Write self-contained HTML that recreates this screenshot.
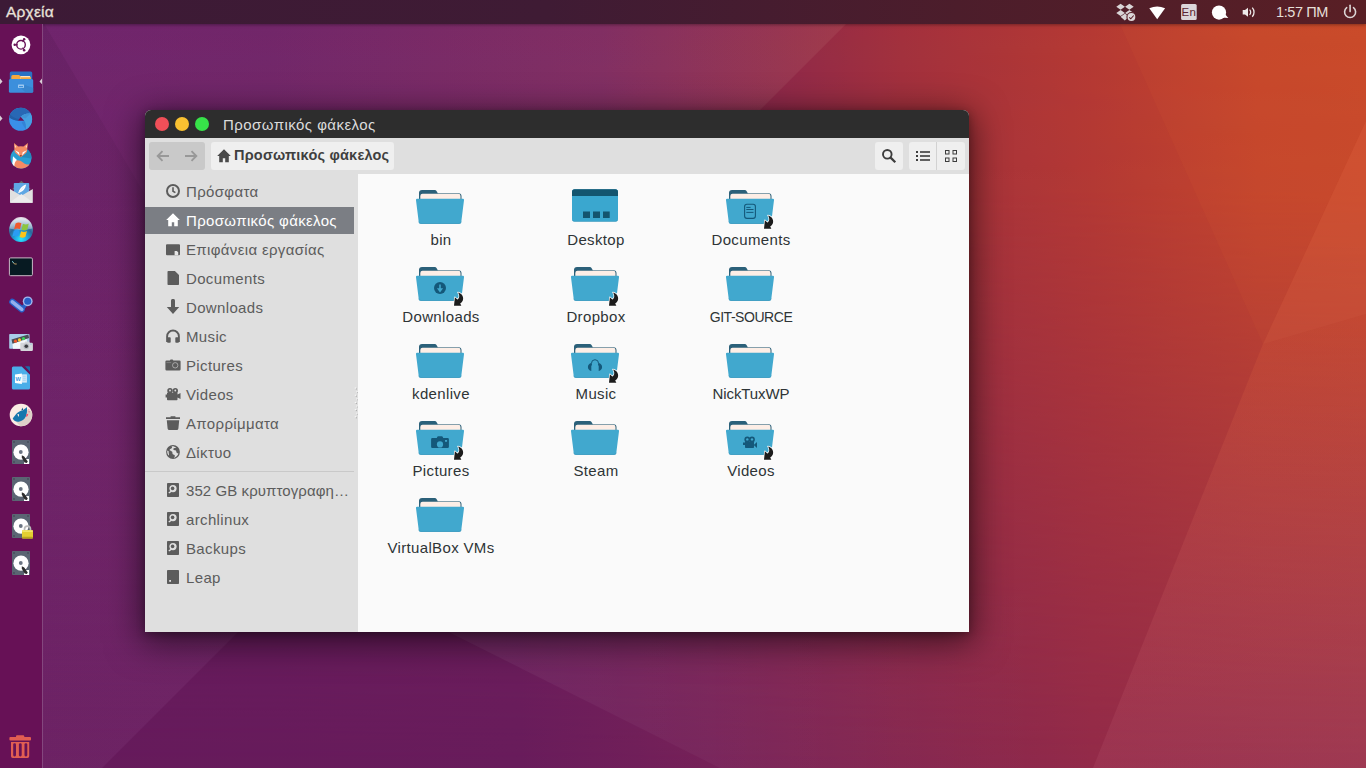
<!DOCTYPE html>
<html lang="el">
<head>
<meta charset="utf-8">
<title>Αρχεία</title>
<style>
*{box-sizing:border-box;margin:0;padding:0}
html,body{width:1366px;height:768px;overflow:hidden;background:#6d2165}
body{position:relative;font-family:"Liberation Sans","DejaVu Sans",sans-serif;font-size:15px;letter-spacing:.35px;color:#3c3c3c}
.abs{position:absolute}
svg.abs{overflow:visible}
#wall{position:absolute;left:0;top:0;width:1366px;height:768px}
#panel{position:absolute;left:0;top:0;width:1366px;height:24px;background:linear-gradient(90deg,#3c1a36 0%,#3f1b34 40%,#4c1d2b 70%,#591f25 100%);box-shadow:0 1px 3px rgba(0,0,0,.35);z-index:1}
#panel .app{position:absolute;left:6px;top:0;line-height:24px;font-size:15.5px;color:#e9e2da;letter-spacing:.2px;-webkit-text-stroke:.3px #e9e2da}
#panel .clock{position:absolute;left:1276px;top:0;line-height:24px;font-size:14.500px;letter-spacing:-.4px;color:#e6dfd8}
#launcher{z-index:2;position:absolute;left:0;top:24px;width:43px;height:744px;background:#671156;border-right:1px solid #84477e}
#win{position:absolute;left:145px;top:110px;width:824px;height:522px;border-radius:6px 6px 0 0;box-shadow:0 7px 34px 4px rgba(0,0,0,.55),0 2px 8px rgba(0,0,0,.3);background:#fafafa;overflow:hidden}
#title{position:absolute;left:0;top:0;width:824px;height:28px;background:#2d2d2d}
#title .t{position:absolute;left:78px;top:1px;line-height:28px;font-size:15px;letter-spacing:.45px;color:#dcdcdc}
.dot{position:absolute;top:7px;width:14px;height:14px;border-radius:50%}
#tool{position:absolute;left:0;top:28px;width:824px;height:36px;background:#dfdfdf}
#side{position:absolute;left:0;top:64px;width:213px;height:458px;background:#dfdfdf}
#content{position:absolute;left:213px;top:64px;width:611px;height:458px;background:#fafafa}
.btn{position:absolute;top:4px;height:28px;background:#efefef;border-radius:3px}
.row{position:absolute;left:0;width:209px;height:27px;line-height:27px;color:#5c5c5c}
.row span{position:absolute;left:41px;top:0;white-space:nowrap}
.row.sel{background:#7b7e84;color:#fff}
.row svg{position:absolute;left:20px;top:5px;width:16px;height:16px}
.lab{position:absolute;width:150px;text-align:center;font-size:15px;line-height:18px;color:#2e3436;white-space:nowrap}
</style>
</head>
<body>
<svg id="wall" viewBox="0 0 1366 768" preserveAspectRatio="none">
<defs>
<linearGradient id="gt" x1="0" y1="0" x2="1366" y2="0" gradientUnits="userSpaceOnUse">
<stop offset="0" stop-color="#691d66"/><stop offset=".2" stop-color="#6b1e62"/><stop offset=".44" stop-color="#7a245c"/><stop offset=".57" stop-color="#912a49"/><stop offset=".66" stop-color="#a3313d"/><stop offset=".8" stop-color="#b63a33"/><stop offset=".92" stop-color="#c6462b"/><stop offset="1" stop-color="#c9482a"/>
</linearGradient>
<linearGradient id="gb" x1="0" y1="0" x2="1366" y2="0" gradientUnits="userSpaceOnUse">
<stop offset="0" stop-color="#651a5b"/><stop offset=".38" stop-color="#681c5b"/><stop offset=".52" stop-color="#752158"/><stop offset=".66" stop-color="#84264f"/><stop offset=".8" stop-color="#922a49"/><stop offset="1" stop-color="#96304a"/>
</linearGradient>
<linearGradient id="gm" x1="0" y1="0" x2="0" y2="768" gradientUnits="userSpaceOnUse">
<stop offset="0" stop-color="#000"/><stop offset=".25" stop-color="#111"/><stop offset="1" stop-color="#fff"/>
</linearGradient>
<mask id="mk"><rect width="1366" height="768" fill="url(#gm)"/></mask>
<linearGradient id="f1" x1="0" y1="0" x2="870" y2="0" gradientUnits="userSpaceOnUse"><stop offset="0" stop-color="#c98cdb" stop-opacity=".07"/><stop offset=".5" stop-color="#e0b0d0" stop-opacity=".07"/><stop offset="1" stop-color="#fff0c0" stop-opacity=".07"/></linearGradient>
<linearGradient id="f2" x1="480" y1="0" x2="1050" y2="0" gradientUnits="userSpaceOnUse"><stop offset="0" stop-color="#fff" stop-opacity=".05"/><stop offset="1" stop-color="#fff" stop-opacity="0"/></linearGradient>
<linearGradient id="f4" x1="0" y1="314" x2="0" y2="768" gradientUnits="userSpaceOnUse"><stop offset="0" stop-color="#f97838" stop-opacity=".13"/><stop offset="1" stop-color="#ffa8b8" stop-opacity=".075"/></linearGradient>
<linearGradient id="f3" x1="0" y1="24" x2="0" y2="420" gradientUnits="userSpaceOnUse"><stop offset="0" stop-color="#200020" stop-opacity=".09"/><stop offset="1" stop-color="#200020" stop-opacity="0"/></linearGradient>
</defs>
<rect width="1366" height="768" fill="url(#gt)"/>
<rect width="1366" height="768" fill="url(#gb)" mask="url(#mk)"/>
<polygon points="0,0 870,0 102,768 0,768" fill="url(#f1)"/>
<polygon points="42,20 160,220 160,420 42,420" fill="url(#f3)"/>
<polygon points="377,596 720,768 1100,768 1100,596" fill="url(#f2)"/>
<polygon points="1110,0 1120,24 1263,344 1366,121 1366,0" fill="#ff9040" fill-opacity=".05"/>
<polygon points="1263,344 1366,121 1366,314" fill="#ff8a50" fill-opacity=".16"/>
<polygon points="1263,344 1366,314 1366,768 1093,768" fill="url(#f4)"/>
</svg>
<div id="panel"><div class="app">Αρχεία</div><div class="clock">1:57 ΠΜ</div><svg class="abs" style="left:1100px;top:0" width="266" height="24" viewBox="1100 0 266 24">
<g fill="#d9d4d6"><path d="M1120.600 3.700l4.300 3-4.300 3-4.300-3zM1129.400 3.700l4.300 3-4.300 3-4.300-3zM1120.600 10l4.300 3-4.300 3-4.300-3zM1129.400 10l4.300 3-4.300 3-4.300-3zM1125 13.800l4 3-4.200 3.700-4.200-3.700 4.200-3z"/></g>
<circle cx="1131.400" cy="17" r="5" fill="#59202a"/><circle cx="1131.400" cy="17" r="3.900" fill="#dcd7d9"/><path d="M1129.300 17.300l1.500 1.500 2.900-3.300" fill="none" stroke="#59202a" stroke-width="1.100"/>
<path d="M1149.300 8.300Q1157.200 4.800 1165.100 8.300L1157.200 19.200Z" fill="#fff"/>
<rect x="1181.100" y="3.900" width="15.600" height="16.100" rx="1.600" fill="#dcd6d9"/>
<text x="1188.900" y="16.200" font-family="Liberation Sans, sans-serif" font-size="11.500" fill="#5c2430" text-anchor="middle">En</text>
<circle cx="1219" cy="12.600" r="7.100" fill="#fff"/><path d="M1222 17.500l6.300.4-3.800-4.500z" fill="#fff"/>
<path d="M1242.700 10h2.300l3-2.300v9l-3-2.300h-2.300z" fill="#efeaea"/><path d="M1249.600 9.600a4 4 0 0 1 0 5.200" fill="none" stroke="#efeaea" stroke-width="1.200"/><path d="M1252.300 7.600a7 7 0 0 1 0 9.200" fill="none" stroke="#efeaea" stroke-width="1.300"/>
<path d="M1346.700 7.700a5.500 5.500 0 1 0 6.800 0" fill="none" stroke="#dcd6d6" stroke-width="1.600" stroke-linecap="round"/><path d="M1350.100 5.300v6.300" stroke="#dcd6d6" stroke-width="1.600" stroke-linecap="round"/>
</svg></div>
<div id="launcher"><svg class="abs" style="left:0;top:0" width="43" height="744" viewBox="0 24 43 744">
<!-- ubuntu -->
<circle cx="21" cy="44.800" r="9.400" fill="#fff"/><circle cx="21" cy="44.800" r="4.300" fill="none" stroke="#671156" stroke-width="1.400"/><path d="M21 44.800L14.700 44.800M21 44.800L24.200 39.300M21 44.800L24.200 50.300" stroke="#671156" stroke-width=".9"/><circle cx="21" cy="44.800" r="3.100" fill="#fff"/>
<g fill="#671156"><circle cx="14.700" cy="44.800" r="1.250"/><circle cx="24.150" cy="39.350" r="1.250"/><circle cx="24.150" cy="50.250" r="1.250"/></g>
<!-- files -->
<path d="M0 78.600l2.500 2.800-2.500 2.800zM42 78.600l-2.500 2.800 2.500 2.800z" fill="#d9cfd8"/>
<rect x="9.800" y="71.500" width="22.400" height="12" rx="1.500" fill="#2a72c4"/><path d="M11.300 80v-3.500a1.500 1.500 0 0 1 1.500-1.500h6.200l1.300 1h9a1.500 1.500 0 0 1 1.500 1.500V80z" fill="#f5a940"/><path d="M20.500 76.200h9.500v3h-9.500z" fill="#fdf4e4"/><path d="M20.500 77.200h10.300v3h-10.300z" fill="#f5a940"/>
<rect x="8.900" y="79" width="24.300" height="13.800" rx="1.500" fill="#3c8fdc"/><path d="M21 88l4.800 4.800h5.900a1.500 1.500 0 0 0 1.500-1.500V88l-8-3z" fill="#3580c8" opacity=".7"/><rect x="18" y="84.500" width="6" height="3.400" rx=".6" fill="#9cc8f0"/><rect x="19" y="86" width="4" height="1.200" fill="#3c8fdc"/>
<!-- chromium-ish -->
<path d="M0 115.600l2.500 2.800-2.500 2.800z" fill="#d9cfd8"/>
<circle cx="20.600" cy="119.250" r="11.500" fill="#3a8fe8"/>
<path d="M9.300 117.200A11.500 11.500 0 0 1 30.600 113.600C26.500 113.300 23 114.600 20.600 116.750L17.900 120.700C14.500 120.300 11.200 118.800 9.300 117.200z" fill="#2868b5"/>
<path d="M9.300 117.200L10.300 114.600C12.500 117 15.500 118.500 19 119.100L17.900 120.700C14.500 120.300 11.200 118.800 9.300 117.200z" fill="#235fa6"/>
<path d="M20.600 116.750C23 114.600 26.500 113.300 30.600 113.600A11.500 11.500 0 0 1 25.800 129.500C26.300 126 25.600 123 24.200 120.700z" fill="#45a0e2"/>
<path d="M20.600 116.750C23 114.600 26.500 113.300 30.600 113.600L25.500 118.500z" fill="#3f93d6"/>
<path d="M24.200 120.700C25.600 123 26.300 126 25.800 129.500L21.500 122.500z" fill="#3383d6"/>
<path d="M20.600 116.750L17.900 120.700L24.200 120.700z" fill="#6a1257"/>
<!-- fox -->
<circle cx="21" cy="157.900" r="10.600" fill="#2a9fd3"/>
<path d="M21 157L27.800 149.800A10.600 10.600 0 0 1 31.500 158.500z" fill="#2285b6" opacity=".8"/>
<path d="M14.200 161.200C17 159.600 20 160 23 162.500C25.500 164.500 27.500 165 29.600 164.200A10.600 10.600 0 0 1 13.800 165.700z" fill="#f58a64"/>
<path d="M13 156.200L17 160C15.400 161 14.500 163 14.300 166.200A10.600 10.600 0 0 1 12.300 163.500z" fill="#fff"/>
<path d="M14 143.100L18.300 146.600Q20.800 145.800 23.400 146.600L27.900 143.100L27.200 149.500Q27.500 151.500 25.500 153.500L20.800 157.300L16 153.500Q14 151.500 14.400 149.500z" fill="#f58a64"/>
<path d="M14.700 144.600L16.600 147L15 147.800zM27.200 144.600L25.300 147L26.900 147.800z" fill="#fcd6c6"/>
<path d="M14.900 150.300L18.900 152.200L19.600 155.600zM26.800 150.300L22.700 152.200L22 155.600z" fill="#fff"/>
<path d="M19.700 155.300h2.200l-1.100 1.700z" fill="#7a3a2a"/>
<!-- mail -->
<path d="M21.400 180.800l9.500 8.400h-19z" fill="#6a6a6a"/><rect x="13.800" y="183" width="15.400" height="14" rx=".8" fill="#5fa7e4"/><path d="M18.300 193.200c.6-4 3.800-7.300 7.800-8.600-.6 4-3.400 7.500-7.800 8.600z" fill="#fff"/><path d="M18.300 193.300l5.800-6.600" stroke="#cfe2f5" stroke-width=".5"/>
<path d="M10 189.100l11.400 6.600 11.400-6.600v12.900a.8.800 0 0 1-.8.800H10.800a.8.800 0 0 1-.8-.8z" fill="#e0e0e0"/><path d="M10 202.300l11.400-8.200 11.400 8.200a.8.800 0 0 1-.6.500H10.600a.8.800 0 0 1-.6-.5z" fill="#ececec"/>
<!-- windows orb -->
<defs><radialGradient id="orb" cx=".5" cy=".88" r=".85"><stop offset="0" stop-color="#28e8ff"/><stop offset=".3" stop-color="#20a8e0"/><stop offset=".6" stop-color="#2a6a9c"/><stop offset="1" stop-color="#7a98b8"/></radialGradient><linearGradient id="orbh" x1="0" y1="0" x2="0" y2="1"><stop offset="0" stop-color="#fff" stop-opacity=".85"/><stop offset="1" stop-color="#fff" stop-opacity=".3"/></linearGradient></defs>
<circle cx="21" cy="230" r="12" fill="url(#orb)"/><path d="M9.600 228.500A11.400 11.400 0 0 1 32.400 228.500Q21 232 9.600 228.500z" fill="url(#orbh)"/>
<g transform="translate(21.200 230.200) scale(1.220) translate(-20.400 -229.300)"><path d="M15.800 223.800c1.500-1 3.200-1 4.800-.2l-1.200 4.800c-1.600-.8-3.300-.8-4.800.2z" fill="#f0582a"/><path d="M21.800 224.100c1.600.8 3.300.8 4.800-.2l-1.200 4.800c-1.500 1-3.200 1-4.800.2z" fill="#8cc63f"/><path d="M14.300 229.800c1.500-1 3.200-1 4.800-.2l-1.200 4.800c-1.600-.8-3.300-.8-4.800.2z" fill="#2a9df4"/><path d="M20.300 230.100c1.600.8 3.300.8 4.800-.2l-1.200 4.800c-1.500 1-3.200 1-4.800.2z" fill="#fcc419"/></g>
<!-- terminal -->
<rect x="9.400" y="257.900" width="23" height="17.800" rx="1.200" fill="#071a22" stroke="#c9b9c6" stroke-width="1"/><path d="M12.500 261.500l2 2.500h2.200" fill="none" stroke="#d9b070" stroke-width=".9"/><path d="M12.300 261.200l1.200 1.600" stroke="#5ac8e8" stroke-width=".9"/>
<!-- steam -->
<path d="M12.300 301.800L21.800 309.300" stroke="#2860c8" stroke-width="6.200" stroke-linecap="round"/><path d="M21.800 309.300l4.500-5.500" stroke="#2860c8" stroke-width="4"/><path d="M12.300 301.800L21.800 309.300" stroke="#93aeee" stroke-width="3.600" stroke-linecap="round"/>
<circle cx="27.700" cy="301.300" r="4.900" fill="#a3b8ee"/><circle cx="27.700" cy="301.300" r="3.500" fill="#2860c8"/>
<!-- screenshot -->
<rect x="9.200" y="334" width="20.300" height="14.700" rx=".8" fill="#a9cdea"/><path d="M12.500 343.500l14-5.500 1.500 10.700H13z" fill="#f3f7fb"/><path d="M11.500 339.500l16.800-5 .8 3.600-16.600 5.600z" fill="#4a4f57"/><circle cx="15.500" cy="341.200" r="1.600" fill="#f0582a"/><circle cx="19.500" cy="339.900" r="1.600" fill="#f8c630"/><circle cx="23.500" cy="338.600" r="1.600" fill="#3ad455"/>
<path d="M21.500 342.800h3l.8-1.200h3.600l.8 1.200h2a1.200 1.200 0 0 1 1.200 1.200v5.800a1.200 1.200 0 0 1-1.200 1.200H21.500a1.200 1.200 0 0 1-1.200-1.200V344a1.200 1.200 0 0 1 1.200-1.200z" fill="#d4d6da"/><circle cx="26.300" cy="346.300" r="2.900" fill="#b9bcc2"/><circle cx="26.300" cy="346.300" r="1.800" fill="#3a3d42"/><circle cx="31" cy="344" r=".6" fill="#6ab0e8"/>
<!-- writer -->
<path d="M13.400 366.600h8.300l8.300 8.100v13.300a1.500 1.500 0 0 1-1.500 1.500H13.400a1.500 1.500 0 0 1-1.500-1.500v-19.900a1.500 1.500 0 0 1 1.500-1.500z" fill="#4aaee9"/><path d="M25 366.300h3.800a1.200 1.200 0 0 1 1.200 1.200v4.300z" fill="#1a6aa8"/><rect x="21.500" y="374.400" width="5.400" height="8.200" fill="#d4e9f8"/><path d="M22.800 376.200h3M22.800 378.200h3M22.800 380.200h3" stroke="#9ccdf0" stroke-width=".9"/><path d="M15 374.500l6.900-.9v10.300l-6.900-.9z" fill="#fff"/>
<text x="18.400" y="381.300" font-family="Liberation Sans, sans-serif" font-size="5.600" font-weight="bold" fill="#3a9ade" text-anchor="middle">W</text>
<!-- wireshark-ish -->
<circle cx="21" cy="415" r="11.300" fill="#fbece4"/><path d="M16 421.500L27 410L31.500 411A11.300 11.300 0 0 1 20 426.200z" fill="#ddd0c8"/>
<path d="M12.700 418.600C14.500 416 16 414 17.500 412.800C19.500 411.200 21.500 410.600 23 410.200L24.500 409C25.600 408.300 26.400 407.700 26.900 407.100C27.300 410.500 27 414 25.800 416.500C24.500 419.200 22 421.200 18.800 421.700C16.500 422 14 421.300 12.700 418.600z" fill="#1777ad"/>
<path d="M21.300 410.300l1.200-2.900.7 2.600z" fill="#0f5680"/>
<path d="M17.100 414.600l1.900-.6v2.900z" fill="#fbece4"/>
<path d="M26.200 414.300l2.100-.6-.6 2.200-1.500 1.200z" fill="#f4526a"/><circle cx="29.100" cy="411.800" r=".65" fill="#f4526a"/><circle cx="28.900" cy="409.700" r=".5" fill="#f4526a"/>
<g transform="translate(0,440)"><rect x="12" y="0" width="18" height="24" rx=".8" fill="#5b6573"/><g fill="#454d59"><circle cx="14" cy="2" r=".9"/><circle cx="28" cy="2" r=".9"/><circle cx="14" cy="22" r=".9"/></g><circle cx="21" cy="12.200" r="7.600" fill="#fff"/><circle cx="20.800" cy="12" r="1.900" fill="#6b7482"/><rect x="24" y="19" width="5" height="5" fill="#fff"/><path d="M21.800 15.200l2.400 1.300 3.600 5-1 1.600-2.200-.6-2.800-4.800z" fill="#2d2d2d"/></g><g transform="translate(0,477)"><rect x="12" y="0" width="18" height="24" rx=".8" fill="#5b6573"/><g fill="#454d59"><circle cx="14" cy="2" r=".9"/><circle cx="28" cy="2" r=".9"/><circle cx="14" cy="22" r=".9"/></g><circle cx="21" cy="12.200" r="7.600" fill="#fff"/><circle cx="20.800" cy="12" r="1.900" fill="#6b7482"/><rect x="24" y="19" width="5" height="5" fill="#fff"/><path d="M21.800 15.200l2.400 1.300 3.600 5-1 1.600-2.200-.6-2.800-4.800z" fill="#2d2d2d"/></g><g transform="translate(0,514)"><rect x="12" y="0" width="18" height="24" rx=".8" fill="#5b6573"/><g fill="#454d59"><circle cx="14" cy="2" r=".9"/><circle cx="28" cy="2" r=".9"/><circle cx="14" cy="22" r=".9"/></g><circle cx="21" cy="12.200" r="7.600" fill="#fff"/><circle cx="20.800" cy="12" r="1.900" fill="#6b7482"/><path d="M24.500 17v-1.800a3 3 0 0 1 6 0V17" fill="none" stroke="#b9b9b9" stroke-width="1.700"/><rect x="22" y="16.300" width="11" height="8.200" rx=".8" fill="#e3cf32"/><rect x="22" y="16.300" width="11" height="1.600" rx=".8" fill="#f0e468"/><rect x="22" y="22.800" width="11" height="1.700" rx=".8" fill="#b8a51d"/></g><g transform="translate(0,551)"><rect x="12" y="0" width="18" height="24" rx=".8" fill="#5b6573"/><g fill="#454d59"><circle cx="14" cy="2" r=".9"/><circle cx="28" cy="2" r=".9"/><circle cx="14" cy="22" r=".9"/></g><circle cx="21" cy="12.200" r="7.600" fill="#fff"/><circle cx="20.800" cy="12" r="1.900" fill="#6b7482"/><rect x="24" y="19" width="5" height="5" fill="#fff"/><path d="M21.800 15.200l2.400 1.300 3.600 5-1 1.600-2.200-.6-2.800-4.800z" fill="#2d2d2d"/></g>
<!-- trash -->
<g fill="#e15e52"><rect x="9.400" y="737" width="21.600" height="3.600" rx="1"/><rect x="16" y="735.300" width="8.200" height="3" rx="1"/><path d="M11 741.900h18.200v14.400a1.800 1.800 0 0 1-1.800 1.800H12.800a1.800 1.800 0 0 1-1.800-1.800z"/></g>
<g fill="#671156"><rect x="13.200" y="743.200" width="2.800" height="13.200" rx="1.300"/><rect x="18.900" y="743.200" width="2.800" height="13.200" rx="1.300"/><rect x="24.500" y="743.200" width="2.800" height="13.200" rx="1.300"/></g>
</svg></div>
<div id="win">
<div id="title"><div class="dot" style="left:10px;background:#f04f58"></div><div class="dot" style="left:30px;background:#f9c131"></div><div class="dot" style="left:50px;background:#37e349"></div><div class="t">Προσωπικός φάκελος</div></div>
<div id="tool">
<div class="btn" style="left:4px;width:56px;background:#c9c9c9">
<svg class="abs" style="left:0;top:0" width="56" height="28" viewBox="0 0 56 28"><g fill="none" stroke="#989898" stroke-width="1.900"><path d="M20 14H9M13.500 9.200L8.700 14l4.800 4.800"/><path d="M36 14H47M42.500 9.200L47.300 14l-4.800 4.800"/></g></svg>
</div>
<div class="btn" style="left:66px;width:183px">
<svg class="abs" style="left:5px;top:6px" width="16" height="16" viewBox="0 0 16 16"><path d="M8 1.300L1.200 8H3.200V14.300H6.800V10.300H9.200V14.300H12.800V8H14.800Z" fill="#4a4a4a"/></svg>
<div class="abs pathtxt" style="left:23px;top:0;line-height:27px;font-weight:bold;font-size:14.500px;letter-spacing:.2px;color:#3f3f3f;white-space:nowrap">Προσωπικός φάκελος</div>
</div>
<div class="btn" style="left:730px;width:28px"><svg class="abs" style="left:6px;top:6px" width="16" height="16" viewBox="0 0 16 16"><circle cx="6.300" cy="6.300" r="4.300" fill="none" stroke="#3d3d3d" stroke-width="1.900"/><path d="M9.600 9.600L14.300 14.300" stroke="#3d3d3d" stroke-width="2.200"/></svg></div>
<div class="btn" style="left:764px;width:56px"><div class="abs" style="left:27px;top:0;width:1px;height:28px;background:#d2d2d2"></div>
<svg class="abs" style="left:6px;top:6px" width="16" height="16" viewBox="0 0 16 16"><g fill="#3d3d3d"><rect x="1" y="3" width="2" height="2"/><rect x="1" y="7" width="2" height="2"/><rect x="1" y="11" width="2" height="2"/><rect x="5" y="3.200" width="10" height="1.600"/><rect x="5" y="7.200" width="10" height="1.600"/><rect x="5" y="11.200" width="10" height="1.600"/></g></svg>
<svg class="abs" style="left:34px;top:6px" width="16" height="16" viewBox="0 0 16 16"><g fill="none" stroke="#3d3d3d" stroke-width="1"><rect x="2.500" y="2.500" width="3.500" height="3.500"/><rect x="10" y="2.500" width="3.500" height="3.500"/><rect x="2.500" y="10" width="3.500" height="3.500"/><rect x="10" y="10" width="3.500" height="3.500"/></g></svg>
</div>
</div>
<div id="side">
<div class="row" style="top:4px"><svg viewBox="0 0 16 16"><circle cx="8" cy="8" r="6" fill="none" stroke="currentColor" stroke-width="2"/><path d="M8 4.3V8.2L10.4 9.6" fill="none" stroke="currentColor" stroke-width="1.6"/></svg><span>Πρόσφατα</span></div>
<div class="row sel" style="top:33px"><svg viewBox="0 0 16 16"><path d="M8 1.3L1.2 8H3.2V14.3H6.8V10.3H9.2V14.3H12.8V8H14.8Z" fill="currentColor"/></svg><span>Προσωπικός φάκελος</span></div>
<div class="row" style="top:62px"><svg viewBox="0 0 16 16"><path d="M2 3.2h12a1 1 0 0 1 1 1v9a1 1 0 0 1-1 1H2a1 1 0 0 1-1-1v-9a1 1 0 0 1 1-1z" fill="currentColor"/><path d="M9.6 10h2.2l1.4 1.3v2.9H9.6z" fill="#e6e6e6"/></svg><span>Επιφάνεια εργασίας</span></div>
<div class="row" style="top:91px"><svg viewBox="0 0 16 16"><path d="M3.3 1h6.6L14 5v9.2a.8.8 0 0 1-.8.8H3.3a.8.8 0 0 1-.8-.8V1.8a.8.8 0 0 1 .8-.8z" fill="currentColor"/></svg><span>Documents</span></div>
<div class="row" style="top:120px"><svg viewBox="0 0 16 16"><path d="M6 1.8a2 2 0 0 1 4 0V8h4.2L8 15 1.8 8H6z" fill="currentColor"/></svg><span>Downloads</span></div>
<div class="row" style="top:149px"><svg viewBox="0 0 16 16"><path d="M2.1 14V8.4a5.9 5.9 0 0 1 11.8 0V14" fill="none" stroke="currentColor" stroke-width="1.9"/><rect x="2.1" y="9.2" width="3.6" height="5.6" rx=".8" fill="currentColor"/><rect x="10.3" y="9.2" width="3.6" height="5.6" rx=".8" fill="currentColor"/></svg><span>Music</span></div>
<div class="row" style="top:178px"><svg viewBox="0 0 16 16"><path d="M1.6 3.4h3.2l.8-1h2l.8 1h6a1.2 1.2 0 0 1 1.2 1.2v7.6a1.2 1.2 0 0 1-1.2 1.2H1.6A1.2 1.2 0 0 1 .4 12.200V4.600a1.200 1.200 0 0 1 1.200-1.200z" fill="currentColor"/><circle cx="10.2" cy="8.300" r="2.700" fill="none" stroke="#e0e0e0" stroke-opacity=".55" stroke-width="1"/><path d="M1.400 5.600h4.800" stroke="#e0e0e0" stroke-opacity=".35" stroke-width=".8"/></svg><span>Pictures</span></div>
<div class="row" style="top:207px"><svg viewBox="0 0 16 16"><circle cx="5" cy="4.700" r="2.700" fill="currentColor"/><circle cx="10.300" cy="4.700" r="2.700" fill="currentColor"/><circle cx="5" cy="4.500" r=".9" fill="#dfdfdf"/><circle cx="10.300" cy="4.500" r=".9" fill="#dfdfdf"/><path d="M2 6.800h10.500v1.700l3-1.500v6l-3-1.500v1.900a.8.800 0 0 1-.8.800H2.800a.8.800 0 0 1-.8-.8V11.500H.6V8.600H2z" fill="currentColor"/></svg><span>Videos</span></div>
<div class="row" style="top:236px"><svg viewBox="0 0 16 16"><path d="M5.600 1.300h4.800v1H15v1.800H1V2.300h4.600z" fill="currentColor"/><path d="M1.800 5.200h12.400l-.8 8.300a1.700 1.700 0 0 1-1.700 1.500H4.300a1.700 1.700 0 0 1-1.700-1.500z" fill="currentColor"/></svg><span>Απορρίμματα</span></div>
<div class="row" style="top:265px"><svg viewBox="0 0 16 16"><circle cx="8" cy="8" r="6.900" fill="currentColor"/><path d="M6.500 2.300c1 .8.600 1.900-.4 2.300-1 .5-1.700 1-1.300 2 .4.800 1.500.4 2.200 1 .8.800 0 1.800.8 2.600.7.700 1.700.3 2 1.300.3.900-.4 1.700-1.200 2.300 2.400-.3 4.200-2 4.800-4.200-.6-.2-1.200-.4-1.700-.9-.6-.7-.2-1.500-.9-2.100-.7-.6-1.700-.1-2.300-.8-.6-.8.300-1.600 1.100-1.700.7-.1 1.200.2 1.700-.2-1.200-1.200-3-1.900-4.800-1.600zM2.300 6.500c-.3 1.800.2 3.600 1.400 4.900.5-.5.400-1.200.1-1.800-.3-.7-.2-1.200.1-1.800-.5-.6-1-.9-1.600-1.300z" fill="#dfdfdf"/></svg><span>Δίκτυο</span></div>
<div class="row" style="top:303px"><svg viewBox="0 0 16 16"><rect x="2" y="1" width="12" height="14" rx=".8" fill="currentColor"/><circle cx="8" cy="6.600" r="3.600" fill="#dfdfdf"/><circle cx="7.600" cy="6.400" r="1.800" fill="currentColor"/><path d="M3.400 10.600l2.600-2 .8 1.200-2.600 1.800z" fill="#dfdfdf"/></svg><span style="letter-spacing:.08px">352 GB κρυπτογραφη…</span></div>
<div class="row" style="top:332px"><svg viewBox="0 0 16 16"><rect x="2" y="1" width="12" height="14" rx=".8" fill="currentColor"/><circle cx="8" cy="6.600" r="3.600" fill="#dfdfdf"/><circle cx="7.600" cy="6.400" r="1.800" fill="currentColor"/><path d="M3.400 10.600l2.600-2 .8 1.200-2.600 1.800z" fill="#dfdfdf"/></svg><span>archlinux</span></div>
<div class="row" style="top:361px"><svg viewBox="0 0 16 16"><rect x="2" y="1" width="12" height="14" rx=".8" fill="currentColor"/><circle cx="8" cy="6.600" r="3.600" fill="#dfdfdf"/><circle cx="7.600" cy="6.400" r="1.800" fill="currentColor"/><path d="M3.400 10.600l2.600-2 .8 1.200-2.600 1.800z" fill="#dfdfdf"/></svg><span>Backups</span></div>
<div class="row" style="top:390px"><svg viewBox="0 0 16 16"><rect x="2" y="1" width="12" height="14" rx=".8" fill="currentColor"/><rect x="4.200" y="11" width="1.800" height="1.800" fill="#dfdfdf"/></svg><span>Leap</span></div>
<div class="abs" style="left:0;top:297px;width:209px;height:1px;background:#c9c9c9"></div>
<svg class="abs" style="left:209px;top:212px" width="5" height="36" viewBox="0 0 5 36"><g fill="#fafafa"><rect x="0.8" y="1.5" width="1.200" height="1.200"/><rect x="2.4" y="5.1" width="1.200" height="1.200"/><rect x="0.8" y="8.7" width="1.200" height="1.200"/><rect x="2.4" y="12.3" width="1.200" height="1.200"/><rect x="0.8" y="15.9" width="1.200" height="1.200"/><rect x="2.4" y="19.5" width="1.200" height="1.200"/><rect x="0.8" y="23.1" width="1.200" height="1.200"/><rect x="2.4" y="26.7" width="1.200" height="1.200"/><rect x="0.8" y="30.3" width="1.200" height="1.200"/></g><g fill="#a0a0a0"><rect x="1.8" y="2.5" width="1" height="1"/><rect x="3.4" y="6.1" width="1" height="1"/><rect x="1.8" y="9.7" width="1" height="1"/><rect x="3.4" y="13.3" width="1" height="1"/><rect x="1.8" y="16.9" width="1" height="1"/><rect x="3.4" y="20.5" width="1" height="1"/><rect x="1.8" y="24.1" width="1" height="1"/><rect x="3.4" y="27.7" width="1" height="1"/><rect x="1.8" y="31.3" width="1" height="1"/></g></svg>
</div>
<div id="content">
<svg class="abs" style="left:58px;top:9px" width="48" height="48" viewBox="0 0 48 48"><path d="M3 17V10a3 3 0 0 1 3-3h12.800a2 2 0 0 1 1.700 1l1.300 2.200H42.500a3 3 0 0 1 3 3V17z" fill="#2b6079"/><rect x="4.300" y="10.700" width="40.200" height="8" rx="2.200" fill="#fdeee6"/><path d="M1.200 15.800h45.600a1.200 1.200 0 0 1 1.200 1.400l-2.700 21.600a2.300 2.300 0 0 1-2.300 2H5a2.300 2.300 0 0 1-2.300-2L0 17.200a1.200 1.200 0 0 1 1.200-1.400z" fill="#41a8ce"/><path d="M2.600 38.300a2.300 2.300 0 0 0 2.400 2.500h38a2.300 2.300 0 0 0 2.400-2.500a2.300 2.300 0 0 1-2.300 1.700H5a2.300 2.300 0 0 1-2.400-1.700z" fill="#3697bd"/></svg><div class="lab" style="left:8px;top:57px">bin</div>
<svg class="abs" style="left:210px;top:9px" width="54" height="48" viewBox="0 0 54 48"><rect x="4" y="6.300" width="46" height="32.300" rx="2.600" fill="#3aa7cf"/><path d="M4 13V8.900a2.600 2.600 0 0 1 2.600-2.600h40.800A2.600 2.600 0 0 1 50 8.900V13z" fill="#13556f"/><rect x="15" y="28.500" width="7" height="6.500" fill="#13556f"/><rect x="25" y="28.500" width="7" height="6.500" fill="#13556f"/><rect x="35" y="28.500" width="6.700" height="6.500" fill="#13556f"/><path d="M4 36.500a2.600 2.600 0 0 0 2.600 2.100h40.800a2.600 2.600 0 0 0 2.600-2.100 2.600 2.600 0 0 1-2.600 1.400H6.600A2.600 2.600 0 0 1 4 36.500z" fill="#2f8fb5"/></svg><div class="lab" style="left:163px;top:57px">Desktop</div>
<svg class="abs" style="left:368px;top:9px" width="48" height="48" viewBox="0 0 48 48"><path d="M3 17V10a3 3 0 0 1 3-3h12.800a2 2 0 0 1 1.700 1l1.300 2.200H42.500a3 3 0 0 1 3 3V17z" fill="#2b6079"/><rect x="4.300" y="10.700" width="40.200" height="8" rx="2.200" fill="#fdeee6"/><path d="M1.200 15.800h45.600a1.200 1.200 0 0 1 1.200 1.400l-2.700 21.600a2.300 2.300 0 0 1-2.300 2H5a2.300 2.300 0 0 1-2.300-2L0 17.200a1.200 1.200 0 0 1 1.200-1.400z" fill="#41a8ce"/><path d="M2.600 38.300a2.300 2.300 0 0 0 2.400 2.500h38a2.300 2.300 0 0 0 2.400-2.500a2.300 2.300 0 0 1-2.300 1.700H5a2.300 2.300 0 0 1-2.400-1.700z" fill="#3697bd"/><rect x="18.600" y="21.200" width="10.800" height="14.200" rx="2.300" fill="none" stroke="#14587a" stroke-width="1.100"/><path d="M20.300 24.400h4.300M20.300 26.500h7.200M20.300 29.400h7.200" stroke="#14587a" stroke-width="1"/><path d="M38 45.700L38.900 37.200 41.300 39.600C43.300 38.500 44.200 35.600 42 32.400 47.600 33.600 49.200 40.600 44.200 43.400L45.400 45.700Z" fill="#1c1c1c" stroke="#fff" stroke-width="1.400" stroke-linejoin="round" paint-order="stroke"/></svg><div class="lab" style="left:318px;top:57px">Documents</div>
<svg class="abs" style="left:58px;top:86px" width="48" height="48" viewBox="0 0 48 48"><path d="M3 17V10a3 3 0 0 1 3-3h12.800a2 2 0 0 1 1.700 1l1.300 2.200H42.500a3 3 0 0 1 3 3V17z" fill="#2b6079"/><rect x="4.300" y="10.700" width="40.200" height="8" rx="2.200" fill="#fdeee6"/><path d="M1.200 15.800h45.600a1.200 1.200 0 0 1 1.200 1.400l-2.700 21.600a2.300 2.300 0 0 1-2.300 2H5a2.300 2.300 0 0 1-2.300-2L0 17.200a1.200 1.200 0 0 1 1.200-1.400z" fill="#41a8ce"/><path d="M2.600 38.300a2.300 2.300 0 0 0 2.400 2.500h38a2.300 2.300 0 0 0 2.400-2.500a2.300 2.300 0 0 1-2.300 1.700H5a2.300 2.300 0 0 1-2.400-1.700z" fill="#3697bd"/><circle cx="24" cy="28" r="6" fill="#14587a"/><path d="M23.200 24.600h1.600v3.700h2.300L24 32.400 20.900 28.300h2.300z" fill="#41a8ce"/><path d="M38 45.700L38.900 37.200 41.300 39.600C43.300 38.500 44.200 35.600 42 32.400 47.600 33.600 49.200 40.600 44.200 43.400L45.400 45.700Z" fill="#1c1c1c" stroke="#fff" stroke-width="1.400" stroke-linejoin="round" paint-order="stroke"/></svg><div class="lab" style="left:8px;top:134px">Downloads</div>
<svg class="abs" style="left:213px;top:86px" width="48" height="48" viewBox="0 0 48 48"><path d="M3 17V10a3 3 0 0 1 3-3h12.800a2 2 0 0 1 1.700 1l1.300 2.200H42.500a3 3 0 0 1 3 3V17z" fill="#2b6079"/><rect x="4.300" y="10.700" width="40.200" height="8" rx="2.200" fill="#fdeee6"/><path d="M1.200 15.800h45.600a1.200 1.200 0 0 1 1.200 1.400l-2.700 21.600a2.300 2.300 0 0 1-2.300 2H5a2.300 2.300 0 0 1-2.300-2L0 17.200a1.200 1.200 0 0 1 1.200-1.400z" fill="#41a8ce"/><path d="M2.600 38.300a2.300 2.300 0 0 0 2.400 2.500h38a2.300 2.300 0 0 0 2.400-2.500a2.300 2.300 0 0 1-2.300 1.700H5a2.300 2.300 0 0 1-2.400-1.700z" fill="#3697bd"/><path d="M38 45.700L38.900 37.200 41.300 39.600C43.300 38.500 44.200 35.600 42 32.400 47.600 33.600 49.200 40.600 44.200 43.400L45.400 45.700Z" fill="#1c1c1c" stroke="#fff" stroke-width="1.400" stroke-linejoin="round" paint-order="stroke"/></svg><div class="lab" style="left:163px;top:134px">Dropbox</div>
<svg class="abs" style="left:368px;top:86px" width="48" height="48" viewBox="0 0 48 48"><path d="M3 17V10a3 3 0 0 1 3-3h12.800a2 2 0 0 1 1.700 1l1.300 2.200H42.500a3 3 0 0 1 3 3V17z" fill="#2b6079"/><rect x="4.300" y="10.700" width="40.200" height="8" rx="2.200" fill="#fdeee6"/><path d="M1.200 15.800h45.600a1.200 1.200 0 0 1 1.200 1.400l-2.700 21.600a2.300 2.300 0 0 1-2.300 2H5a2.300 2.300 0 0 1-2.300-2L0 17.200a1.200 1.200 0 0 1 1.200-1.400z" fill="#41a8ce"/><path d="M2.600 38.300a2.300 2.300 0 0 0 2.400 2.500h38a2.300 2.300 0 0 0 2.400-2.500a2.300 2.300 0 0 1-2.300 1.700H5a2.300 2.300 0 0 1-2.400-1.700z" fill="#3697bd"/></svg><div class="lab" style="left:318px;top:134px;font-size:14px;letter-spacing:-.45px">GIT-SOURCE</div>
<svg class="abs" style="left:58px;top:163px" width="48" height="48" viewBox="0 0 48 48"><path d="M3 17V10a3 3 0 0 1 3-3h12.800a2 2 0 0 1 1.700 1l1.300 2.200H42.500a3 3 0 0 1 3 3V17z" fill="#2b6079"/><rect x="4.300" y="10.700" width="40.200" height="8" rx="2.200" fill="#fdeee6"/><path d="M1.200 15.800h45.600a1.200 1.200 0 0 1 1.200 1.400l-2.700 21.600a2.300 2.300 0 0 1-2.300 2H5a2.300 2.300 0 0 1-2.300-2L0 17.200a1.200 1.200 0 0 1 1.200-1.400z" fill="#41a8ce"/><path d="M2.600 38.300a2.300 2.300 0 0 0 2.400 2.500h38a2.300 2.300 0 0 0 2.400-2.500a2.300 2.300 0 0 1-2.300 1.700H5a2.300 2.300 0 0 1-2.400-1.700z" fill="#3697bd"/></svg><div class="lab" style="left:8px;top:211px">kdenlive</div>
<svg class="abs" style="left:213px;top:163px" width="48" height="48" viewBox="0 0 48 48"><path d="M3 17V10a3 3 0 0 1 3-3h12.800a2 2 0 0 1 1.700 1l1.300 2.200H42.500a3 3 0 0 1 3 3V17z" fill="#2b6079"/><rect x="4.300" y="10.700" width="40.200" height="8" rx="2.200" fill="#fdeee6"/><path d="M1.200 15.800h45.600a1.200 1.200 0 0 1 1.200 1.400l-2.700 21.600a2.300 2.300 0 0 1-2.300 2H5a2.300 2.300 0 0 1-2.300-2L0 17.200a1.200 1.200 0 0 1 1.200-1.400z" fill="#41a8ce"/><path d="M2.600 38.300a2.300 2.300 0 0 0 2.400 2.500h38a2.300 2.300 0 0 0 2.400-2.500a2.300 2.300 0 0 1-2.300 1.700H5a2.300 2.300 0 0 1-2.400-1.700z" fill="#3697bd"/><path d="M20.400 28.500v-1.900a3.600 3.900 0 0 1 7.200 0v1.900" fill="none" stroke="#14587a" stroke-width="1"/><path d="M20.300 26v8c-2-.6-3.400-2-3.400-4s1.400-3.400 3.400-4zM27.700 26v8c2-.6 3.400-2 3.400-4s-1.400-3.400-3.400-4z" fill="#14587a"/><path d="M38 45.700L38.900 37.200 41.300 39.600C43.300 38.500 44.200 35.600 42 32.400 47.600 33.600 49.200 40.600 44.200 43.400L45.400 45.700Z" fill="#1c1c1c" stroke="#fff" stroke-width="1.400" stroke-linejoin="round" paint-order="stroke"/></svg><div class="lab" style="left:163px;top:211px">Music</div>
<svg class="abs" style="left:368px;top:163px" width="48" height="48" viewBox="0 0 48 48"><path d="M3 17V10a3 3 0 0 1 3-3h12.800a2 2 0 0 1 1.700 1l1.300 2.200H42.500a3 3 0 0 1 3 3V17z" fill="#2b6079"/><rect x="4.300" y="10.700" width="40.200" height="8" rx="2.200" fill="#fdeee6"/><path d="M1.200 15.800h45.600a1.200 1.200 0 0 1 1.200 1.400l-2.700 21.600a2.300 2.300 0 0 1-2.300 2H5a2.300 2.300 0 0 1-2.300-2L0 17.200a1.200 1.200 0 0 1 1.200-1.400z" fill="#41a8ce"/><path d="M2.600 38.300a2.300 2.300 0 0 0 2.400 2.500h38a2.300 2.300 0 0 0 2.400-2.500a2.300 2.300 0 0 1-2.300 1.700H5a2.300 2.300 0 0 1-2.400-1.700z" fill="#3697bd"/></svg><div class="lab" style="left:318px;top:211px;letter-spacing:-.1px">NickTuxWP</div>
<svg class="abs" style="left:58px;top:240px" width="48" height="48" viewBox="0 0 48 48"><path d="M3 17V10a3 3 0 0 1 3-3h12.800a2 2 0 0 1 1.700 1l1.300 2.200H42.500a3 3 0 0 1 3 3V17z" fill="#2b6079"/><rect x="4.300" y="10.700" width="40.200" height="8" rx="2.200" fill="#fdeee6"/><path d="M1.200 15.800h45.600a1.200 1.200 0 0 1 1.200 1.400l-2.700 21.600a2.300 2.300 0 0 1-2.300 2H5a2.300 2.300 0 0 1-2.300-2L0 17.200a1.200 1.200 0 0 1 1.200-1.400z" fill="#41a8ce"/><path d="M2.600 38.300a2.300 2.300 0 0 0 2.400 2.500h38a2.300 2.300 0 0 0 2.400-2.500a2.300 2.300 0 0 1-2.300 1.700H5a2.300 2.300 0 0 1-2.400-1.700z" fill="#3697bd"/><path d="M16.300 24h4.500l.5-1.200a1 1 0 0 1 .9-.6h3.600a1 1 0 0 1 .9.600l.5 1.200h4.500a1.200 1.200 0 0 1 1.200 1.200v7.600a1.200 1.200 0 0 1-1.200 1.200H16.300a1.200 1.200 0 0 1-1.200-1.200v-7.600a1.200 1.200 0 0 1 1.200-1.200z" fill="#14587a"/><circle cx="24" cy="30.400" r="3.100" fill="#41a8ce"/><rect x="29" y="25.900" width="2.100" height="1.900" rx=".3" fill="#41a8ce"/><path d="M38 45.700L38.900 37.200 41.300 39.600C43.300 38.500 44.200 35.600 42 32.400 47.600 33.600 49.200 40.600 44.200 43.400L45.400 45.700Z" fill="#1c1c1c" stroke="#fff" stroke-width="1.400" stroke-linejoin="round" paint-order="stroke"/></svg><div class="lab" style="left:8px;top:288px">Pictures</div>
<svg class="abs" style="left:213px;top:240px" width="48" height="48" viewBox="0 0 48 48"><path d="M3 17V10a3 3 0 0 1 3-3h12.800a2 2 0 0 1 1.700 1l1.300 2.200H42.500a3 3 0 0 1 3 3V17z" fill="#2b6079"/><rect x="4.300" y="10.700" width="40.200" height="8" rx="2.200" fill="#fdeee6"/><path d="M1.200 15.800h45.600a1.200 1.200 0 0 1 1.200 1.400l-2.700 21.600a2.300 2.300 0 0 1-2.300 2H5a2.300 2.300 0 0 1-2.300-2L0 17.200a1.200 1.200 0 0 1 1.200-1.400z" fill="#41a8ce"/><path d="M2.600 38.300a2.300 2.300 0 0 0 2.400 2.500h38a2.300 2.300 0 0 0 2.400-2.500a2.300 2.300 0 0 1-2.300 1.700H5a2.300 2.300 0 0 1-2.400-1.700z" fill="#3697bd"/></svg><div class="lab" style="left:163px;top:288px">Steam</div>
<svg class="abs" style="left:368px;top:240px" width="48" height="48" viewBox="0 0 48 48"><path d="M3 17V10a3 3 0 0 1 3-3h12.800a2 2 0 0 1 1.700 1l1.300 2.200H42.500a3 3 0 0 1 3 3V17z" fill="#2b6079"/><rect x="4.300" y="10.700" width="40.200" height="8" rx="2.200" fill="#fdeee6"/><path d="M1.200 15.800h45.600a1.200 1.200 0 0 1 1.200 1.400l-2.700 21.600a2.300 2.300 0 0 1-2.300 2H5a2.300 2.300 0 0 1-2.300-2L0 17.200a1.200 1.200 0 0 1 1.200-1.400z" fill="#41a8ce"/><path d="M2.600 38.300a2.300 2.300 0 0 0 2.400 2.500h38a2.300 2.300 0 0 0 2.400-2.500a2.300 2.300 0 0 1-2.300 1.700H5a2.300 2.300 0 0 1-2.400-1.700z" fill="#3697bd"/><circle cx="21.300" cy="25.400" r="2.900" fill="#14587a"/><circle cx="26" cy="25.400" r="2.900" fill="#14587a"/><circle cx="21.300" cy="25.400" r="1.200" fill="#41a8ce"/><circle cx="26" cy="25.400" r="1.200" fill="#41a8ce"/><path d="M19 27.600h9v3.200l3-2.900v6.200l-3-2.900v2a.8.800 0 0 1-.8.800h-7.400a.8.800 0 0 1-.8-.8V31H17v-2.600h2z" fill="#14587a"/><path d="M38 45.700L38.900 37.200 41.300 39.600C43.300 38.500 44.200 35.600 42 32.400 47.600 33.600 49.200 40.600 44.200 43.400L45.400 45.700Z" fill="#1c1c1c" stroke="#fff" stroke-width="1.400" stroke-linejoin="round" paint-order="stroke"/></svg><div class="lab" style="left:318px;top:288px">Videos</div>
<svg class="abs" style="left:58px;top:317px" width="48" height="48" viewBox="0 0 48 48"><path d="M3 17V10a3 3 0 0 1 3-3h12.800a2 2 0 0 1 1.700 1l1.300 2.200H42.500a3 3 0 0 1 3 3V17z" fill="#2b6079"/><rect x="4.300" y="10.700" width="40.200" height="8" rx="2.200" fill="#fdeee6"/><path d="M1.200 15.800h45.600a1.200 1.200 0 0 1 1.200 1.400l-2.700 21.600a2.300 2.300 0 0 1-2.300 2H5a2.300 2.300 0 0 1-2.300-2L0 17.200a1.200 1.200 0 0 1 1.200-1.400z" fill="#41a8ce"/><path d="M2.600 38.300a2.300 2.300 0 0 0 2.400 2.500h38a2.300 2.300 0 0 0 2.400-2.500a2.300 2.300 0 0 1-2.300 1.700H5a2.300 2.300 0 0 1-2.400-1.700z" fill="#3697bd"/></svg><div class="lab" style="left:8px;top:365px">VirtualBox VMs</div>
</div>
</div>
</body>
</html>
